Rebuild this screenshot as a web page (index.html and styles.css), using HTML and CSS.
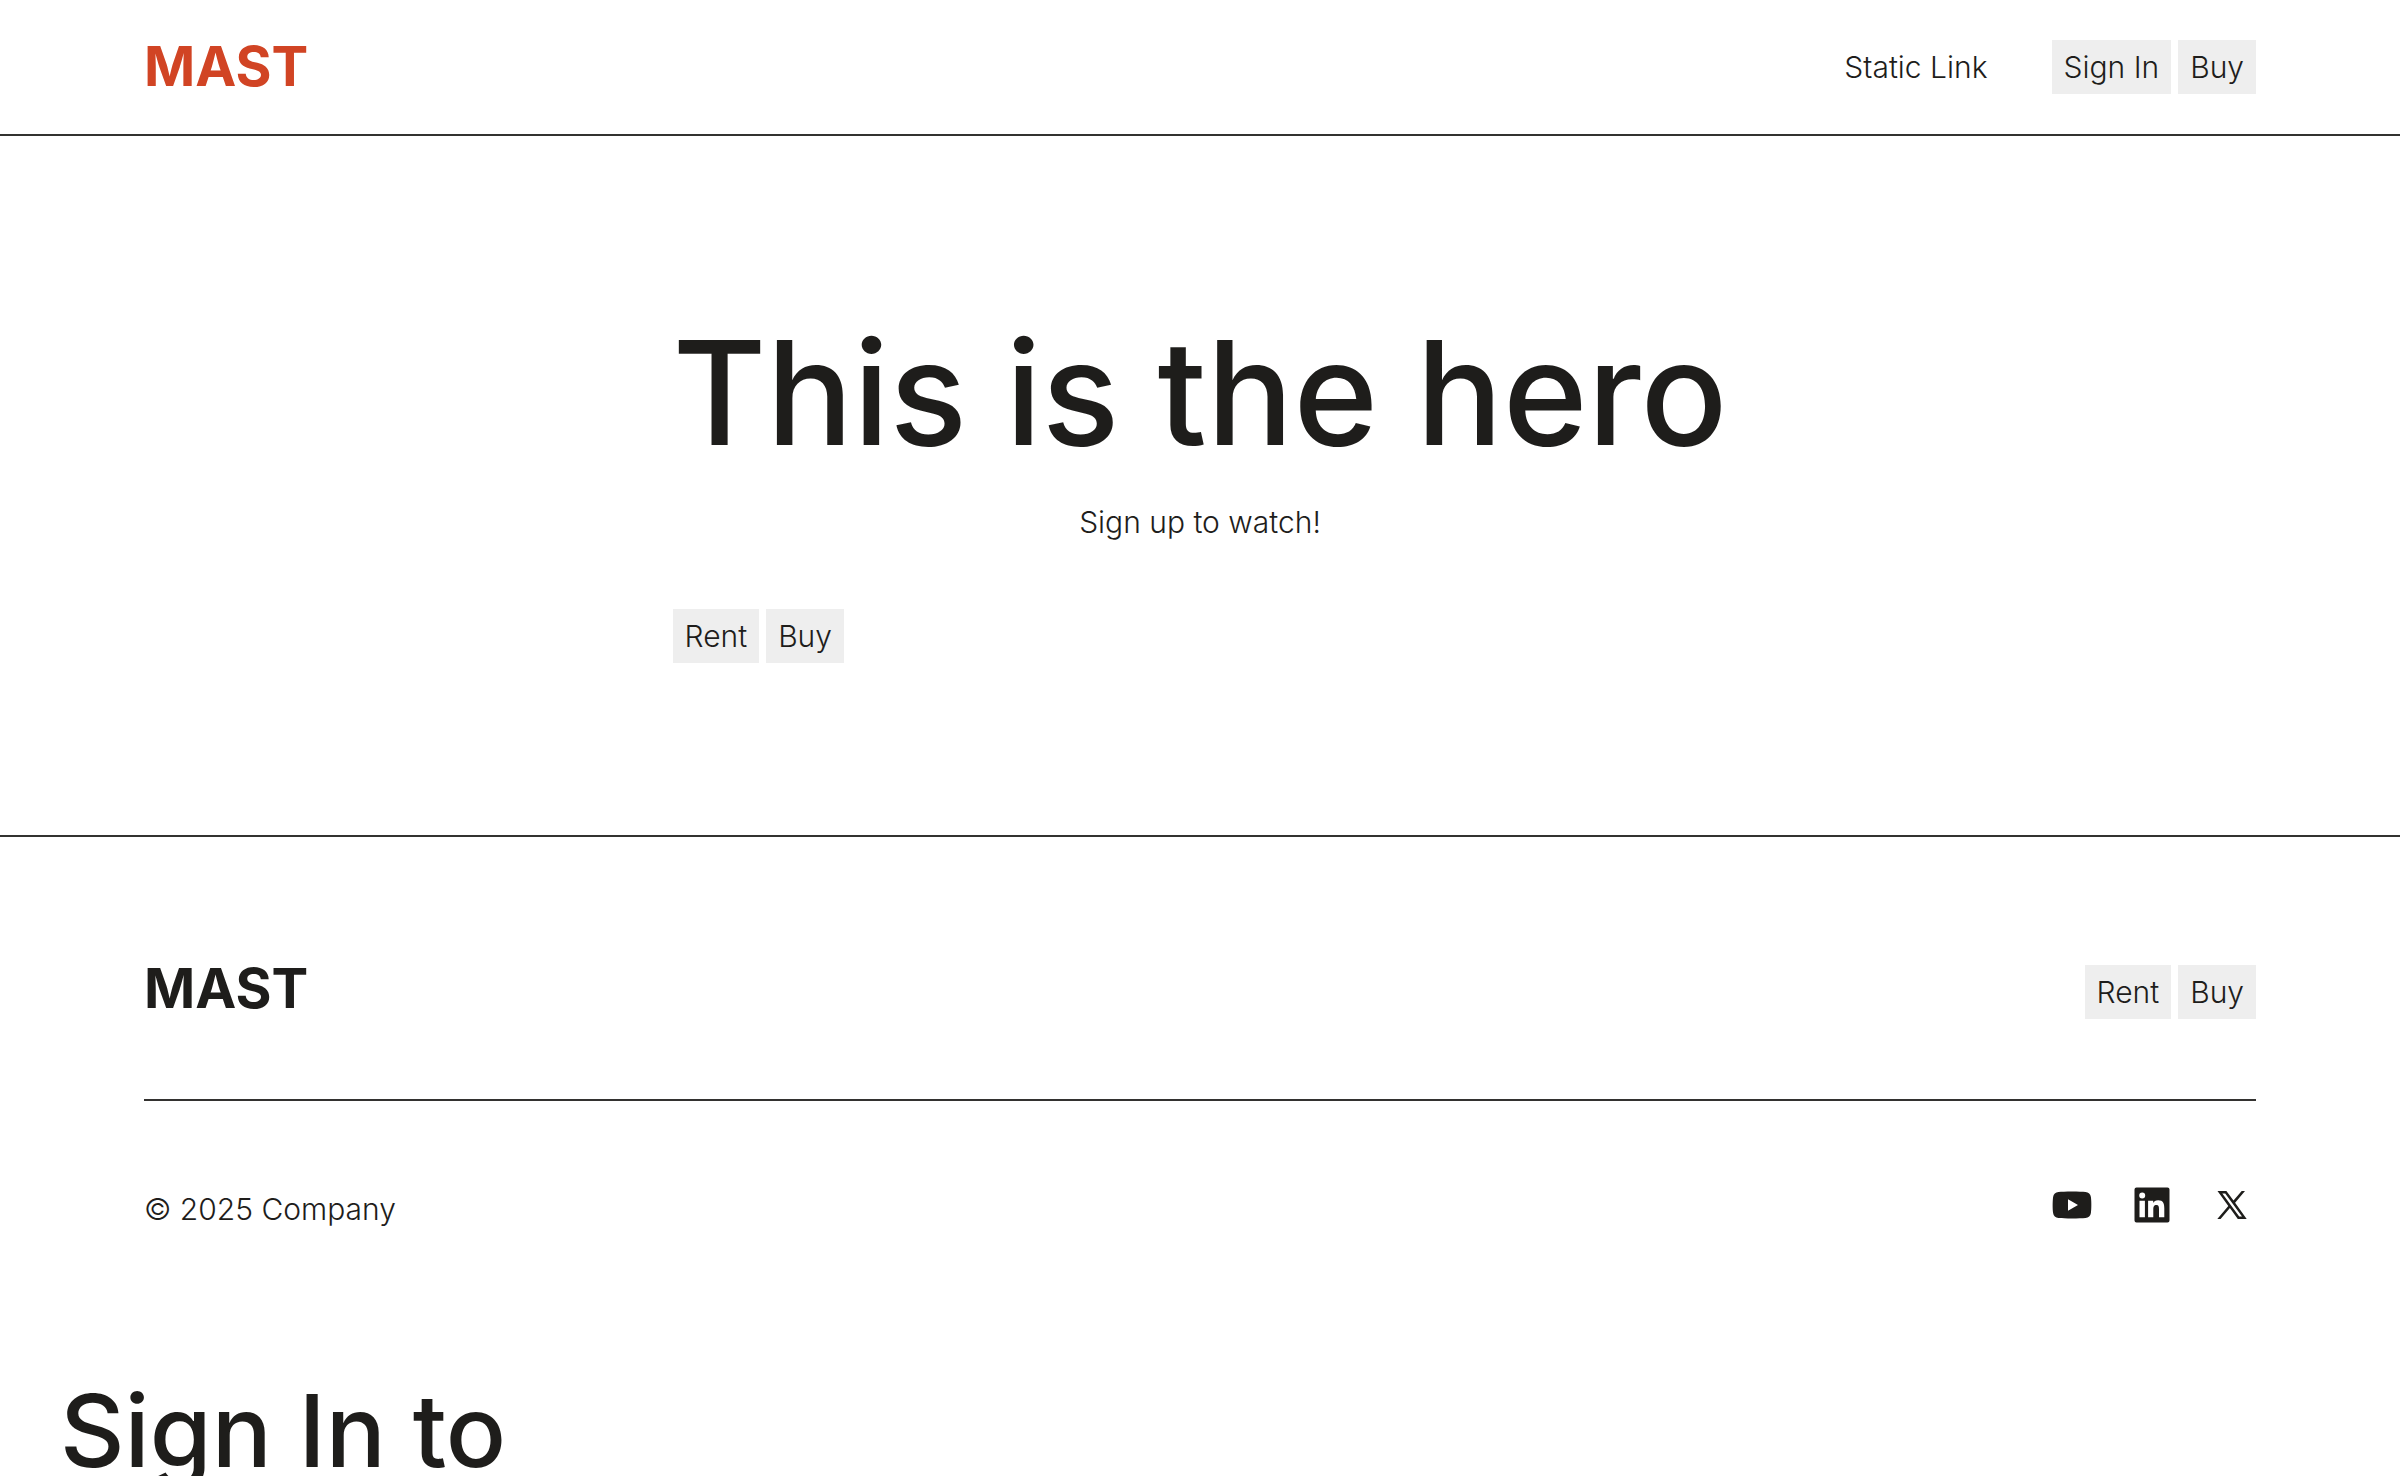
FILE: index.html
```html
<!DOCTYPE html>
<html lang="en">
<head>
<meta charset="utf-8">
<meta name="viewport" content="width=device-width, initial-scale=1">
<title>MAST</title>
<link rel="stylesheet" href="styles.css">
</head>
<body>
<header class="header">
  <a class="logo logo-accent" href="#">MAST</a>
  <nav class="nav">
    <a class="nav-link" href="#">Static Link</a>
    <div class="actions">
      <button class="button" type="button">Sign In</button>
      <button class="button" type="button">Buy</button>
    </div>
  </nav>
</header>
<main class="hero">
  <div class="hero-content">
    <h1 class="hero-title">This is the hero</h1>
    <p class="hero-text">Sign up to watch!</p>
    <div class="actions">
      <button class="button" type="button">Rent</button>
      <button class="button" type="button">Buy</button>
    </div>
  </div>
</main>
<footer class="footer">
  <div class="footer-top">
    <a class="logo footer-logo" href="#">MAST</a>
    <div class="actions">
      <button class="button" type="button">Rent</button>
      <button class="button" type="button">Buy</button>
    </div>
  </div>
  <div class="footer-bottom">
    <p class="copyright">© 2025 Company</p>
    <div class="social">
      <a class="social-link" href="#" aria-label="YouTube"><svg class="icon" viewBox="0 0 48 48"><path fill-rule="evenodd" d="M24 10.500C30 10.500 35 10.700 37.500 11C40.500 11.300 42.500 13.300 42.900 16C43.500 20 43.500 28 42.900 32C42.500 34.700 40.500 36.700 37.500 37C32 37.600 16 37.600 10.500 37C7.500 36.700 5.500 34.700 5.100 32C4.500 28 4.500 20 5.100 16C5.500 13.300 7.500 11.300 10.500 11C13 10.700 18 10.500 24 10.500ZM20 18.300V29.700L30 24Z"/></svg></a>
      <a class="social-link" href="#" aria-label="LinkedIn"><svg class="icon" viewBox="0 0 48 48"><path fill-rule="evenodd" d="M8.500 6.500H39.500Q41.500 6.500 41.500 8.500V39.500Q41.500 41.500 39.500 41.500H8.500Q6.500 41.500 6.500 39.500V8.500Q6.500 6.500 8.500 6.500ZM11.500 19.700V36.300H16.900V19.700ZM14.200 11.400A3 3 0 1 0 14.200 17.400A3 3 0 1 0 14.200 11.400ZM20.100 19.700V36.300H25.300V28.100C25.300 25.900 25.800 23.900 28.400 23.900C31 23.900 31 26.300 31 28.300V36.300H36.300V27.200C36.300 22.700 35.300 19.300 30.100 19.300C27.600 19.300 25.900 20.600 25.200 21.900V19.700Z"/></svg></a>
      <a class="social-link" href="#" aria-label="X"><svg class="icon" viewBox="0 0 48 48"><path fill-rule="evenodd" d="M9.500 10H18.400L25.500 19.600L33.700 10H37L27.100 21.700L38.700 38H29.800L21.900 27L12.600 38H9.300L20.300 24.900ZM14.300 12.400L31.200 35.500H34L17.200 12.400Z"/></svg></a>
    </div>
  </div>
</footer>
<section class="sign-in">
  <h2 class="sign-in-title">Sign In to</h2>
</section>
</body>
</html>
```
FILE: styles.css
```css
* {
  box-sizing: border-box;
}

html {
  background: #fff;
}

body {
  height: 100vh;
  margin: 0;
  overflow: hidden auto;
  color: #1e1d1b;
  font: 300 30px/48px Inter, "Liberation Sans", sans-serif;
}

h1, h2, p {
  margin: 0;
}

a {
  color: inherit;
  text-decoration: none;
}

.header {
  display: flex;
  justify-content: space-between;
  align-items: flex-start;
  padding: 40px 6%;
  border-bottom: 2px solid #333230;
}

.logo {
  font-size: 55px;
  font-weight: 700;
  line-height: 52px;
}

.logo-accent {
  color: #d14424;
}

.footer-logo {
  line-height: 46px;
}

.nav {
  display: flex;
  align-items: center;
  gap: 64px;
}

.actions {
  display: flex;
  gap: 7px;
}

.button {
  padding: 3px 12px;
  border: 0;
  background: #eee;
  color: inherit;
  font: inherit;
}

.hero {
  display: flex;
  justify-content: center;
  padding: 160px 6% 172px;
  border-bottom: 2px solid #333230;
}

.hero-title {
  font-size: 144px;
  font-weight: 500;
  line-height: 194px;
}

.hero-text {
  margin: 8px 0 63px;
  text-align: center;
}

.footer {
  padding: 128px 6% 0;
}

.footer-top {
  display: flex;
  justify-content: space-between;
  padding-bottom: 80px;
  border-bottom: 2px solid #333230;
}

.footer-bottom {
  display: flex;
  justify-content: space-between;
  align-items: flex-start;
  padding: 80px 0;
}

.copyright {
  padding-top: 4px;
}

.social {
  display: flex;
  gap: 32px;
}

.social-link {
  display: flex;
}

.icon {
  width: 48px;
  height: 48px;
  fill: currentColor;
}

.sign-in {
  padding: 48px 60px;
}

.sign-in-title {
  font-size: 100px;
  font-weight: 500;
  line-height: 140px;
}
```
